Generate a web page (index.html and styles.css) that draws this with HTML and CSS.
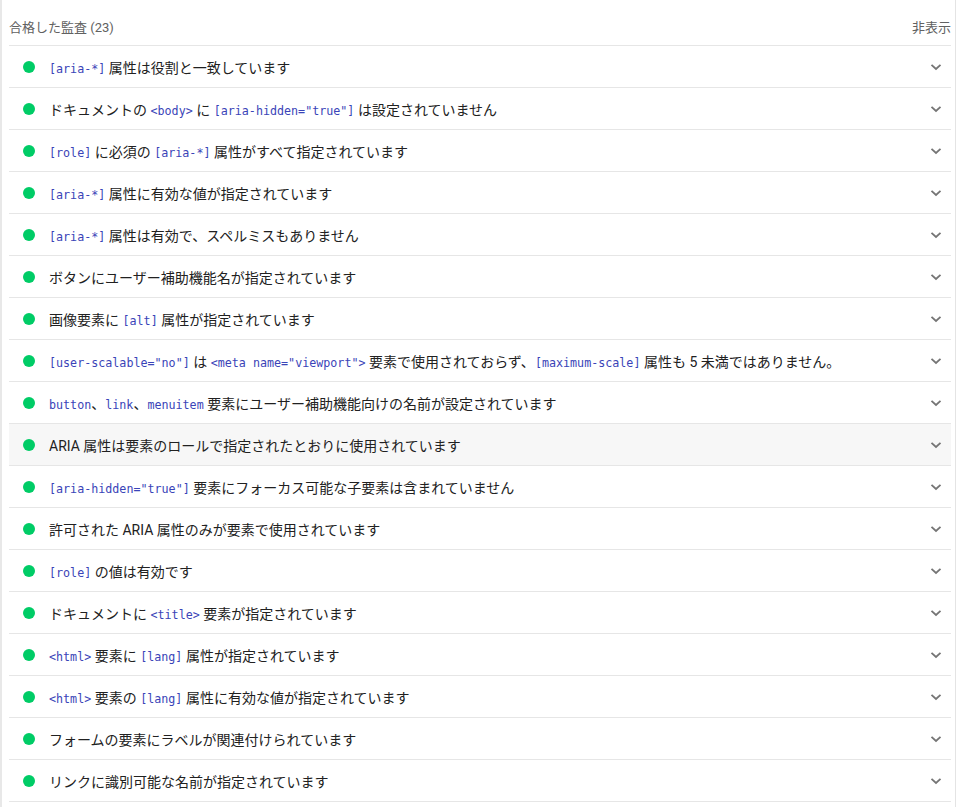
FILE: index.html
```html
<!DOCTYPE html>
<html lang="ja">
<head>
<meta charset="utf-8">
<title>合格した監査</title>
<link rel="stylesheet" href="styles.css">
</head>
<body>
<div class="panel">
  <div class="group">
    <div class="group-header">
      <span class="group-title">合格した監査 <span class="count">(23)</span></span>
      <span class="toggle">非表示</span>
    </div>
    <div class="audit"><span class="dot"></span><span class="title"><code>[aria-*]</code> 属性は役割と一致しています</span><svg class="chev" viewBox="0 0 12 8"><path d="M1.5 1.8 L6 6 L10.5 1.8"/></svg></div>
    <div class="audit"><span class="dot"></span><span class="title">ドキュメントの <code>&lt;body&gt;</code> に <code>[aria-hidden="true"]</code> は設定されていません</span><svg class="chev" viewBox="0 0 12 8"><path d="M1.5 1.8 L6 6 L10.5 1.8"/></svg></div>
    <div class="audit"><span class="dot"></span><span class="title"><code>[role]</code> に必須の <code>[aria-*]</code> 属性がすべて指定されています</span><svg class="chev" viewBox="0 0 12 8"><path d="M1.5 1.8 L6 6 L10.5 1.8"/></svg></div>
    <div class="audit"><span class="dot"></span><span class="title"><code>[aria-*]</code> 属性に有効な値が指定されています</span><svg class="chev" viewBox="0 0 12 8"><path d="M1.5 1.8 L6 6 L10.5 1.8"/></svg></div>
    <div class="audit"><span class="dot"></span><span class="title"><code>[aria-*]</code> 属性は有効で、スペルミスもありません</span><svg class="chev" viewBox="0 0 12 8"><path d="M1.5 1.8 L6 6 L10.5 1.8"/></svg></div>
    <div class="audit"><span class="dot"></span><span class="title">ボタンにユーザー補助機能名が指定されています</span><svg class="chev" viewBox="0 0 12 8"><path d="M1.5 1.8 L6 6 L10.5 1.8"/></svg></div>
    <div class="audit"><span class="dot"></span><span class="title">画像要素に <code>[alt]</code> 属性が指定されています</span><svg class="chev" viewBox="0 0 12 8"><path d="M1.5 1.8 L6 6 L10.5 1.8"/></svg></div>
    <div class="audit"><span class="dot"></span><span class="title"><code>[user-scalable="no"]</code> は <code>&lt;meta name="viewport"&gt;</code> 要素で使用されておらず、<code>[maximum-scale]</code> 属性も 5 未満ではありません。</span><svg class="chev" viewBox="0 0 12 8"><path d="M1.5 1.8 L6 6 L10.5 1.8"/></svg></div>
    <div class="audit"><span class="dot"></span><span class="title"><code>button</code>、<code>link</code>、<code>menuitem</code> 要素にユーザー補助機能向けの名前が設定されています</span><svg class="chev" viewBox="0 0 12 8"><path d="M1.5 1.8 L6 6 L10.5 1.8"/></svg></div>
    <div class="audit hover"><span class="dot"></span><span class="title">ARIA 属性は要素のロールで指定されたとおりに使用されています</span><svg class="chev" viewBox="0 0 12 8"><path d="M1.5 1.8 L6 6 L10.5 1.8"/></svg></div>
    <div class="audit"><span class="dot"></span><span class="title"><code>[aria-hidden="true"]</code> 要素にフォーカス可能な子要素は含まれていません</span><svg class="chev" viewBox="0 0 12 8"><path d="M1.5 1.8 L6 6 L10.5 1.8"/></svg></div>
    <div class="audit"><span class="dot"></span><span class="title">許可された ARIA 属性のみが要素で使用されています</span><svg class="chev" viewBox="0 0 12 8"><path d="M1.5 1.8 L6 6 L10.5 1.8"/></svg></div>
    <div class="audit"><span class="dot"></span><span class="title"><code>[role]</code> の値は有効です</span><svg class="chev" viewBox="0 0 12 8"><path d="M1.5 1.8 L6 6 L10.5 1.8"/></svg></div>
    <div class="audit"><span class="dot"></span><span class="title">ドキュメントに <code>&lt;title&gt;</code> 要素が指定されています</span><svg class="chev" viewBox="0 0 12 8"><path d="M1.5 1.8 L6 6 L10.5 1.8"/></svg></div>
    <div class="audit"><span class="dot"></span><span class="title"><code>&lt;html&gt;</code> 要素に <code>[lang]</code> 属性が指定されています</span><svg class="chev" viewBox="0 0 12 8"><path d="M1.5 1.8 L6 6 L10.5 1.8"/></svg></div>
    <div class="audit"><span class="dot"></span><span class="title"><code>&lt;html&gt;</code> 要素の <code>[lang]</code> 属性に有効な値が指定されています</span><svg class="chev" viewBox="0 0 12 8"><path d="M1.5 1.8 L6 6 L10.5 1.8"/></svg></div>
    <div class="audit"><span class="dot"></span><span class="title">フォームの要素にラベルが関連付けられています</span><svg class="chev" viewBox="0 0 12 8"><path d="M1.5 1.8 L6 6 L10.5 1.8"/></svg></div>
    <div class="audit"><span class="dot"></span><span class="title">リンクに識別可能な名前が指定されています</span><svg class="chev" viewBox="0 0 12 8"><path d="M1.5 1.8 L6 6 L10.5 1.8"/></svg></div>
  </div>
</div>
</body>
</html>
```

FILE: styles.css
```css
html, body {
  margin: 0;
  padding: 0;
  background: #ffffff;
}
body {
  font-family: Roboto, "Noto Sans CJK JP", sans-serif;
  color: #212121;
  height: 807px;
  overflow: hidden;
}
.panel {
  width: 956px;
  height: 807px;
  box-sizing: border-box;
  border-left: 2px solid #e8e8e8;
  border-right: 1px solid #e4e4e4;
  padding: 0 4px 0 7px;
}
.group-header {
  display: flex;
  justify-content: space-between;
  align-items: center;
  height: 46px;
  box-sizing: border-box;
  padding-top: 8px;
  border-bottom: 1px solid #e6e6e6;
  font-size: 13px;
  color: #616161;
}
.audit {
  display: flex;
  align-items: center;
  height: 42px;
  box-sizing: border-box;
  border-bottom: 1px solid #e6e6e6;
  font-size: 14px;
  padding-left: 14px;
  padding-right: 9px;
}
.audit.hover {
  background: #f7f7f7;
}
.dot {
  width: 12px;
  height: 12px;
  border-radius: 50%;
  background: #00cc66;
  flex: none;
  margin-right: 14px;
}
.title {
  flex: 1;
  white-space: nowrap;
}
code {
  font-family: "DejaVu Sans Mono", monospace;
  font-size: 11.7px;
  color: #3a44b8;
}
.chev {
  width: 12px;
  height: 8px;
  flex: none;
  fill: none;
  stroke: #757575;
  stroke-width: 1.8;
}
```
